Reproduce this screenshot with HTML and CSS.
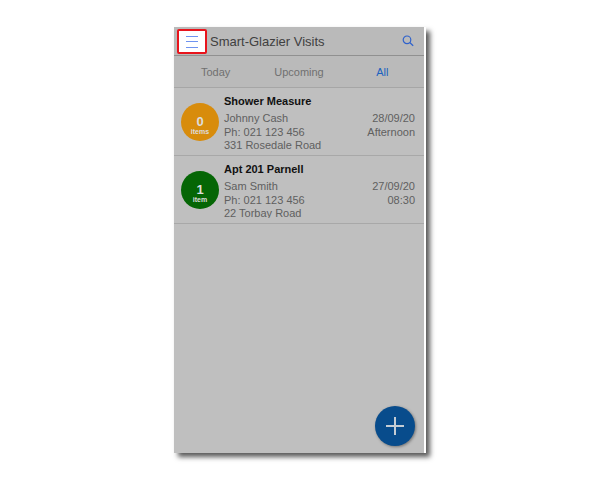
FILE: index.html
```html
<!DOCTYPE html>
<html lang="en">
<head>
    <meta charset="UTF-8">
    <meta name="viewport" content="width=device-width, initial-scale=1.0">
    <title>Smart-Glazier Visits</title>
    <link rel="stylesheet" href="styles.css">
</head>
<body>
    <main class="phone">
        <header class="topbar">
            <button class="menu-btn" aria-label="Menu">
                <svg width="12" height="13" viewBox="0 0 12 13" stroke="#6f93f0" stroke-width="1">
                    <path d="M0 1.5H12M0 6.5H12M0 12.5H12"/>
                </svg>
            </button>
            <h1>Smart-Glazier Visits</h1>
            <button class="search-btn" aria-label="Search">
                <svg width="12" height="12" viewBox="0 0 12 12" fill="none" stroke="#2f62cc" stroke-width="1.2">
                    <circle cx="5" cy="4.8" r="3.8"/>
                    <path d="M7.7 7.5L11.2 10.8"/>
                </svg>
            </button>
        </header>

        <nav class="tabs">
            <a href="#">Today</a>
            <a href="#">Upcoming</a>
            <a href="#" class="active">All</a>
        </nav>

        <section class="visits">
            <article class="visit">
                <div class="badge orange"><strong>0</strong><span>items</span></div>
                <div class="details">
                    <h2>Shower Measure</h2>
                    <p>Johnny Cash</p>
                    <p>Ph: 021 123 456</p>
                    <p class="address">331 Rosedale Road</p>
                </div>
                <div class="when">
                    <p>28/09/20</p>
                    <p>Afternoon</p>
                </div>
            </article>
            <article class="visit">
                <div class="badge green"><strong>1</strong><span>item</span></div>
                <div class="details">
                    <h2>Apt 201 Parnell</h2>
                    <p>Sam Smith</p>
                    <p>Ph: 021 123 456</p>
                    <p class="address">22 Torbay Road</p>
                </div>
                <div class="when">
                    <p>27/09/20</p>
                    <p>08:30</p>
                </div>
            </article>
        </section>

        <button class="add-btn" aria-label="Add visit">
            <svg width="18" height="18" viewBox="0 0 18 18" stroke="#c4ccd4" stroke-width="2">
                <path d="M9 0V18M0 9H18"/>
            </svg>
        </button>
    </main>
</body>
</html>
```
FILE: styles.css
```css
* {
    box-sizing: border-box;
}

body {
    margin: 0;
    min-height: 100vh;
    padding: 27px 0;
    display: flex;
    justify-content: center;
    background-color: #fff;
    font-family: "Liberation Sans", Arial, sans-serif;
    font-size: 11px;
    color: #606060;
}

h1, h2, p {
    margin: 0;
}

button {
    padding: 0;
    border: none;
    background: none;
    display: flex;
    align-items: center;
    justify-content: center;
}

.phone {
    width: 42%;
    min-width: 251px;
    display: flex;
    flex-direction: column;
    background-color: #bfbfbf;
    border-right: 2px solid #fff;
    box-shadow: 4px 4px 5px rgba(0, 0, 0, 0.65);
}

.topbar {
    display: flex;
    align-items: center;
    height: 29px;
    padding: 0 10px 0 3px;
    background-color: #bababa;
    border-bottom: 1px solid #909090;
}

.menu-btn {
    width: 30px;
    height: 25px;
    border: 2px solid #e8141c;
    border-radius: 2px;
    background-color: #fff;
}

.topbar h1 {
    flex: 1;
    padding-left: 3px;
    font-size: 13px;
    font-weight: normal;
    color: #404040;
}

.tabs {
    display: grid;
    grid-template-columns: repeat(3, 1fr);
    height: 32px;
    background-color: #bababa;
    border-bottom: 1px solid #a6a6a6;
}

.tabs a {
    display: flex;
    align-items: center;
    justify-content: center;
    color: #707070;
    text-decoration: none;
}

.tabs a.active {
    color: #1a62c0;
}

.visit {
    display: flex;
    height: 68px;
    padding: 6px 9px 0 7px;
    border-bottom: 1px solid #a8a8a8;
}

.badge {
    width: 38px;
    height: 38px;
    margin-top: 9px;
    padding-top: 8px;
    border-radius: 50%;
    display: flex;
    flex-direction: column;
    align-items: center;
    justify-content: center;
    color: #ddd;
    font-size: 7px;
    font-weight: bold;
    line-height: 8px;
}

.badge strong {
    font-size: 13px;
    line-height: 12px;
}

.orange {
    background-color: #d88c0c;
}

.green {
    background-color: #056605;
}

.details {
    flex: 1;
    padding-left: 5px;
}

.details h2 {
    margin-bottom: 3px;
    font-size: 11px;
    line-height: 14px;
    color: #111;
}

.details p, .when p {
    line-height: 14px;
}

/* long addresses are cut off at the bottom of the row */
.details .address {
    height: 11px;
    line-height: 13px;
    overflow: hidden;
}

.when {
    padding-top: 17px;
    text-align: right;
}

.add-btn {
    width: 40px;
    height: 40px;
    margin: auto 9px 7px auto;
    border-radius: 50%;
    background-color: #084c8c;
    box-shadow: 1px 1px 3px rgba(0, 0, 0, 0.4);
}
```
